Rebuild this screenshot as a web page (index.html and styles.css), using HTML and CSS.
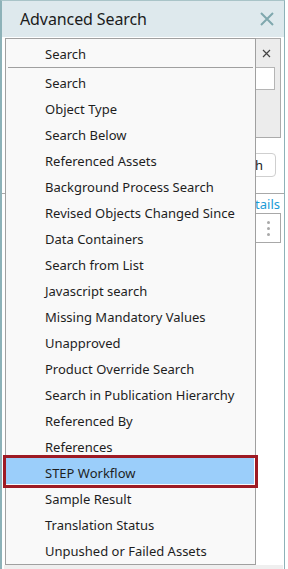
FILE: index.html
```html
<!DOCTYPE html>
<html>
<head>
<meta charset="utf-8">
<link rel="stylesheet" href="styles.css">
</head>
<body>
<div class="window">
  <div class="titlebar">
    <span class="title">Advanced Search</span>
    <svg class="close" width="14" height="14" viewBox="0 0 14 14"><path d="M1 1L13 13M13 1L1 13" stroke="#7fa8ae" stroke-width="2" fill="none"/></svg>
  </div>
  <div class="content">
    <div class="panel">
      <div class="criteria">
        <svg class="small-x" width="9" height="9" viewBox="0 0 9 9"><path d="M1 1L8 8M8 1L1 8" stroke="#444" stroke-width="1.2" fill="none"/></svg>
        <div class="input"></div>
      </div>
      <div class="btn-row"><button class="btn">Search</button></div>
      <div class="results">
        <div class="links"><span class="link">Details</span></div>
        <div class="dots-row"><div class="dots-box"><span class="dot"></span><span class="dot"></span><span class="dot"></span></div></div>
      </div>
      <div class="strip"></div>
    </div>
    <div class="menu">
      <div class="menu-head">Search</div>
      <div class="sep"></div>
      <ul class="items">
        <li>Search</li>
        <li>Object Type</li>
        <li>Search Below</li>
        <li>Referenced Assets</li>
        <li>Background Process Search</li>
        <li>Revised Objects Changed Since</li>
        <li>Data Containers</li>
        <li>Search from List</li>
        <li>Javascript search</li>
        <li>Missing Mandatory Values</li>
        <li>Unapproved</li>
        <li>Product Override Search</li>
        <li>Search in Publication Hierarchy</li>
        <li>Referenced By</li>
        <li>References</li>
        <li class="selected">STEP Workflow</li>
        <li>Sample Result</li>
        <li>Translation Status</li>
        <li>Unpushed or Failed Assets</li>
      </ul>
    </div>
  </div>
</div>
</body>
</html>
```

FILE: styles.css
```css
* { box-sizing: border-box; }
body {
  margin: 0;
  background: #ffffff;
  font-family: "Noto Sans", "Open Sans", sans-serif;
}
.window {
  width: 285px;
  height: 569px;
  border-left: 2px solid #8db2b8;
  border-right: 1px solid #8db2b8;
  border-top: 1px solid #a9c4c8;
  display: flex;
  flex-direction: column;
  background: #ffffff;
}
.titlebar {
  height: 36px;
  flex: none;
  background: #dee9ed;
  display: flex;
  align-items: center;
  justify-content: space-between;
  padding: 0 10px 0 18px;
}
.title {
  font-size: 16px;
  color: #1b1b1b;
  letter-spacing: -0.1px;
}
.close { display: block; }
.content {
  position: relative;
  flex: 1;
  display: flex;
  flex-direction: column;
}
.panel {
  flex: 1;
  display: flex;
  flex-direction: column;
  padding-top: 1px;
}
.criteria {
  height: 100px;
  margin: 0 3px 0 3px;
  background: #ececec;
  border: 1px solid #ababab;
  display: flex;
  flex-direction: column;
  align-items: flex-end;
  padding: 10px 5px 0 0;
}
.small-x { display: block; margin-right: 4px; }
.input {
  margin-top: 9px;
  width: 200px;
  height: 23px;
  background: #fff;
  border: 1px solid #b5b5b5;
}
.btn-row {
  display: flex;
  justify-content: flex-end;
  padding: 15px 8px 0 0;
  height: 56px;
  border-bottom: 1px solid #a8a8a8;
}
.btn {
  height: 24px;
  width: 80px;
  border: 1px solid #cfcfcf;
  border-radius: 4px;
  background: #fff;
  font-family: inherit;
  font-size: 13px;
  color: #222;
  text-align: right;
  padding: 0 12px 0 0;
}
.results { flex: 1; }
.links {
  display: flex;
  justify-content: flex-end;
  padding: 1px 4px 0 0;
  height: 19px;
}
.link { font-size: 13px; color: #1b9ad6; line-height: 18px; }
.dots-row {
  display: flex;
  justify-content: flex-end;
  padding-right: 3px;
}
.dots-box {
  width: 26px;
  height: 30px;
  border: 1px solid #a8a8a8;
  display: flex;
  flex-direction: column;
  align-items: center;
  justify-content: center;
  gap: 3px;
}
.dot { width: 3px; height: 3px; border-radius: 50%; background: #a9a9a9; }
.strip {
  height: 4px;
  background: #efefef;
  margin: 0 1px 0 2px;
}
.menu {
  position: absolute;
  left: 3px;
  top: 1px;
  width: 251px;
  height: 527px;
  background: #f9f9f9;
  border: 1px solid #a0a0a0;
  color: #1e1e1e;
  font-size: 13px;
}
.menu-head {
  height: 28px;
  line-height: 30px;
  padding-left: 39px;
}
.sep {
  height: 1px;
  background: #a0a0a0;
  margin: 0 2px 0 2px;
}
.items {
  list-style: none;
  margin: 0;
  padding: 0;
}
.items li {
  height: 26px;
  line-height: 26px;
  padding-left: 39px;
  padding-top: 2px;
  white-space: nowrap;
}
.items li.selected {
  position: relative;
  background: #9bcefa;
  box-shadow: inset -1px 0 0 #ffffff;
}
.items li.selected::after {
  content: "";
  position: absolute;
  left: -3px;
  right: -3px;
  top: -3px;
  bottom: -4px;
  border: 3px solid #9e1b24;
}
```
